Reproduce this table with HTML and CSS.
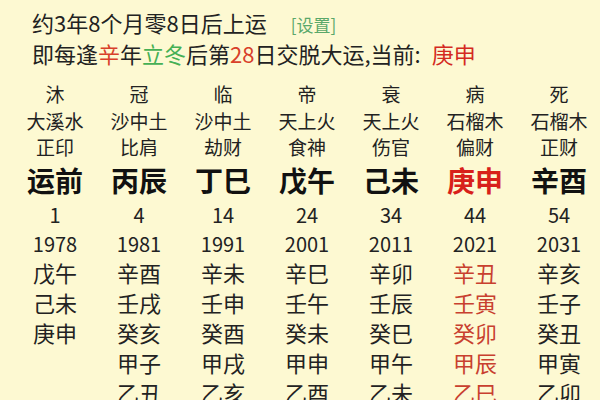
FILE: index.html
```html
<!DOCTYPE html>
<html lang="zh">
<head>
<meta charset="utf-8">
<link rel="stylesheet" href="styles.css">
</head>
<body>
<div class="page">
  <div class="line">约3年8个月零8日后上运<span class="set">[设置]</span></div>
  <div class="line">即每逢<span class="red">辛</span>年<span class="green">立冬</span>后第<span class="red">28</span>日交脱大运,当前: <span class="cur">庚申</span></div>
  <div class="grid">
    <div class="c r1">沐</div><div class="c r1">冠</div><div class="c r1">临</div><div class="c r1">帝</div><div class="c r1">衰</div><div class="c r1">病</div><div class="c r1">死</div>
    <div class="c r2">大溪水</div><div class="c r2">沙中土</div><div class="c r2">沙中土</div><div class="c r2">天上火</div><div class="c r2">天上火</div><div class="c r2">石榴木</div><div class="c r2">石榴木</div>
    <div class="c r2">正印</div><div class="c r2">比肩</div><div class="c r2">劫财</div><div class="c r2">食神</div><div class="c r2">伤官</div><div class="c r2">偏财</div><div class="c r2">正财</div>
    <div class="c big">运前</div><div class="c big">丙辰</div><div class="c big">丁巳</div><div class="c big">戊午</div><div class="c big">己未</div><div class="c big hot">庚申</div><div class="c big">辛酉</div>
    <div class="c num">1</div><div class="c num">4</div><div class="c num">14</div><div class="c num">24</div><div class="c num">34</div><div class="c num">44</div><div class="c num">54</div>
    <div class="c num">1978</div><div class="c num">1981</div><div class="c num">1991</div><div class="c num">2001</div><div class="c num">2011</div><div class="c num">2021</div><div class="c num">2031</div>
    <div class="c gz">戊午</div><div class="c gz">辛酉</div><div class="c gz">辛未</div><div class="c gz">辛巳</div><div class="c gz">辛卯</div><div class="c gz warm">辛丑</div><div class="c gz">辛亥</div>
    <div class="c gz">己未</div><div class="c gz">壬戌</div><div class="c gz">壬申</div><div class="c gz">壬午</div><div class="c gz">壬辰</div><div class="c gz warm">壬寅</div><div class="c gz">壬子</div>
    <div class="c gz">庚申</div><div class="c gz">癸亥</div><div class="c gz">癸酉</div><div class="c gz">癸未</div><div class="c gz">癸巳</div><div class="c gz warm">癸卯</div><div class="c gz">癸丑</div>
    <div class="c gz"></div><div class="c gz">甲子</div><div class="c gz">甲戌</div><div class="c gz">甲申</div><div class="c gz">甲午</div><div class="c gz warm">甲辰</div><div class="c gz">甲寅</div>
    <div class="c gz"></div><div class="c gz">乙丑</div><div class="c gz">乙亥</div><div class="c gz">乙酉</div><div class="c gz">乙未</div><div class="c gz warm">乙巳</div><div class="c gz">乙卯</div>
  </div>
</div>
</body>
</html>
```

FILE: styles.css
```css
html, body {
  margin: 0;
  padding: 0;
  background: #fdf9d2;
}
body {
  width: 600px;
  height: 400px;
  overflow: hidden;
  font-family: "Noto Sans CJK SC", "Noto Sans", sans-serif;
  color: #222;
}
.page {
  padding: 8px 0 0 32px;
}
.line {
  font-size: 22px;
  line-height: 28px;
  white-space: nowrap;
}
.set {
  font-size: 17px;
  color: #5aa86a;
  margin-left: 24px;
}
.red { color: #d8402a; }
.green { color: #45b055; }
.cur { color: #d42a1f; margin-left: 6px; }
.grid {
  display: grid;
  margin-left: -19px;
  margin-top: 13px;
  grid-template-columns: repeat(7, 84px);
  grid-template-rows: 27px 27px 25px 41px 29px 28px repeat(5, 30px);
}
.c {
  display: flex;
  align-items: center;
  justify-content: center;
  white-space: nowrap;
}
.r1, .r2 { font-size: 19px; }
.big { font-size: 28px; font-weight: 700; color: #111; }
.hot { color: #d8201a; }
.num { font-size: 20px; }
.gz { font-size: 22px; }
.warm { color: #c8402f; }
```
